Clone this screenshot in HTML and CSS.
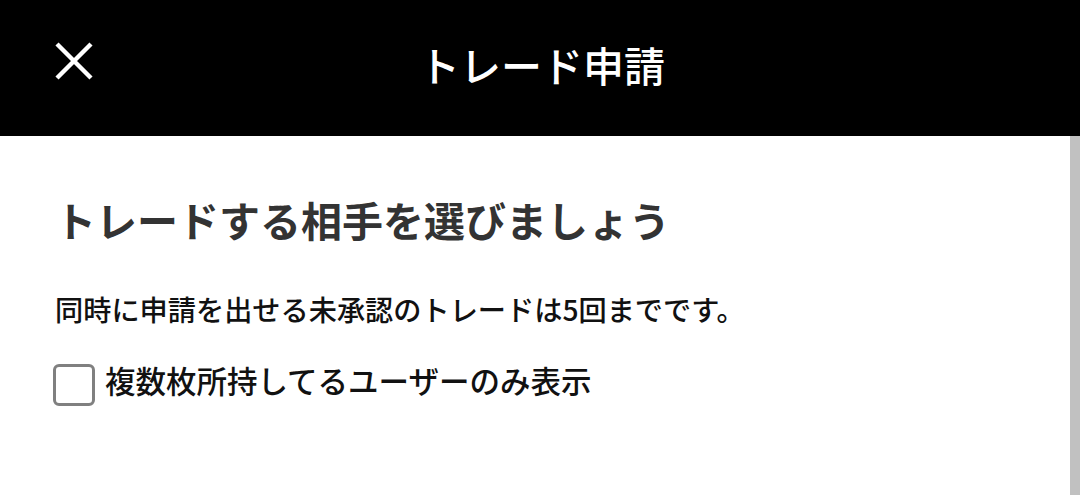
FILE: index.html
```html
<!DOCTYPE html>
<html lang="ja">
<head>
<meta charset="utf-8">
<link rel="stylesheet" href="styles.css">
</head>
<body>
<header class="topbar">
  <div class="topbar-left">
    <button class="close-btn" aria-label="閉じる">
      <svg width="38" height="38" viewBox="0 0 38 38"><path d="M2 2 L36 36 M36 2 L2 36" stroke="#fff" stroke-width="4.4" fill="none"/></svg>
    </button>
  </div>
  <h1 class="title">トレード申請</h1>
  <div class="topbar-right"></div>
</header>
<div class="page">
  <main class="content">
    <h2 class="heading">トレードする相手を選びましょう</h2>
    <p class="note">同時に申請を出せる未承認のトレードは5回までです。</p>
    <label class="check-row">
      <input type="checkbox" class="check">
      <span class="check-label">複数枚所持してるユーザーのみ表示</span>
    </label>
  </main>
  <div class="scrollbar"></div>
</div>
</body>
</html>
```

FILE: styles.css
```css
html, body {
  margin: 0;
  padding: 0;
  height: 100%;
  overflow: hidden;
}
body {
  font-family: "Noto Sans CJK JP", "Noto Sans", sans-serif;
  background: #fff;
  display: flex;
  flex-direction: column;
}
.topbar {
  height: 136px;
  flex: 0 0 136px;
  background: #000;
  display: grid;
  grid-template-columns: 1fr auto 1fr;
  align-items: center;
}
.topbar-left {
  padding-left: 55px;
  display: flex;
  align-items: center;
  margin-top: -14px;
}
.close-btn {
  background: none;
  border: 0;
  padding: 0;
  width: 38px;
  height: 38px;
  display: block;
}
.close-btn svg { display: block; }
.title {
  margin: 0 0 8px 4px;
  color: #fff;
  font-size: 41px;
  font-weight: 500;
  line-height: normal;
}
.page {
  flex: 1;
  display: flex;
}
.content {
  flex: 1;
  padding: 53px 0 0 55px;
}
.heading {
  margin: 0;
  font-size: 41px;
  font-weight: 700;
  color: #333;
  line-height: normal;
}
.note {
  margin: 39px 0 0;
  font-size: 28.2px;
  font-weight: 500;
  color: #111;
  line-height: normal;
}
.check-row {
  margin-top: 29px;
  display: flex;
  align-items: center;
  gap: 10px;
  margin-left: -2px;
}
.check {
  appearance: none;
  -webkit-appearance: none;
  margin: 0;
  width: 42px;
  height: 42px;
  border: 3px solid #808080;
  border-radius: 6px;
  box-sizing: border-box;
  background: #fff;
}
.check-label {
  font-size: 30.5px;
  font-weight: 500;
  color: #111;
  line-height: normal;
  padding-bottom: 10px;
}
.scrollbar {
  flex: 0 0 10px;
  background: #c1c1c1;
}
```
